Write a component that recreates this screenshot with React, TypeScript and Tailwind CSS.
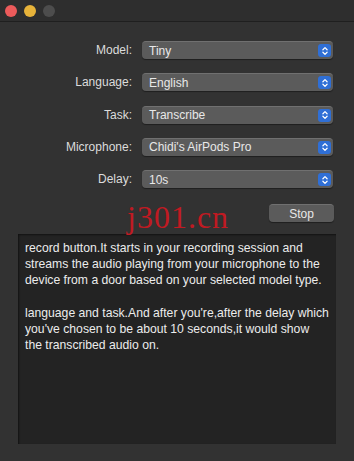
import { ChevronsUpDown } from "lucide-react";

const rows = [
    { label: "Model:", value: "Tiny" },
    { label: "Language:", value: "English" },
    { label: "Task:", value: "Transcribe" },
    { label: "Microphone:", value: "Chidi's AirPods Pro" },
    { label: "Delay:", value: "10s" },
];

function Popup({ value }: { value: string }) {
    return (
        <div className="flex-1 h-[18px] flex items-center justify-between rounded-[4px] bg-[#5b5b5b] border-t border-[#707070] shadow-[0_1px_1px_rgba(0,0,0,0.4)] pl-[7px] pr-[2px]">
            <span className="text-[12px] text-[#e8e8e8] leading-none">{value}</span>
            <span className="w-[13px] h-[13px] rounded-[3px] bg-[#2f6fd6] flex items-center justify-center">
                <ChevronsUpDown size={10} strokeWidth={3} className="text-white" />
            </span>
        </div>
    );
}

export default function App() {
    return (
        <div
            className="w-[354px] h-[461px] bg-[#323232] flex flex-col overflow-hidden"
            style={{ fontFamily: '"Liberation Sans", Arial, sans-serif' }}
        >
            <div className="h-[22px] bg-[#2e2e2e] border-b border-[#1f1f1f] flex items-center gap-[7px] pl-[5px] shrink-0">
                <span className="w-[12px] h-[12px] rounded-full bg-[#ec5b5b]" />
                <span className="w-[12px] h-[12px] rounded-full bg-[#e7b33a]" />
                <span className="w-[12px] h-[12px] rounded-full bg-[#4d4d4d]" />
            </div>

            <div className="flex flex-col gap-[14.25px] pt-[19px] pl-[20px] pr-[21px]">
                {rows.map((r) => (
                    <div key={r.label} className="flex items-center gap-[10px]">
                        <span className="w-[112px] text-right text-[12px] text-[#dcdcdc]">{r.label}</span>
                        <Popup value={r.value} />
                    </div>
                ))}
            </div>

            <div className="relative flex justify-end pr-[20px] mt-[16px]">
                <span className="absolute left-[127px] top-[-3px] text-[32px] tracking-[1px] text-[#c01a22] leading-none" style={{ fontFamily: '"Liberation Serif", serif' }}>
                    j301.cn
                </span>
                <button className="w-[65px] h-[18px] rounded-[4px] bg-[#5b5b5b] border-t border-[#707070] text-[12px] text-[#e8e8e8] leading-none shadow-[0_1px_1px_rgba(0,0,0,0.4)]">
                    Stop
                </button>
            </div>

            <div className="mx-[18px] mt-[12px] h-[210px] bg-[#232323] shadow-[inset_1px_1px_2px_rgba(0,0,0,0.5)] px-[7px] pt-[6px] text-[12.2px] leading-[16px] text-[#ececec]">
                <p>record button.It starts in your recording session and streams the audio playing from your microphone to the device from a door based on your selected model type.</p>
                <p className="mt-[17px]">language and task.And after you're,after the delay which you've chosen to be about 10 seconds,it would show the transcribed audio on.</p>
            </div>
        </div>
    );
}
